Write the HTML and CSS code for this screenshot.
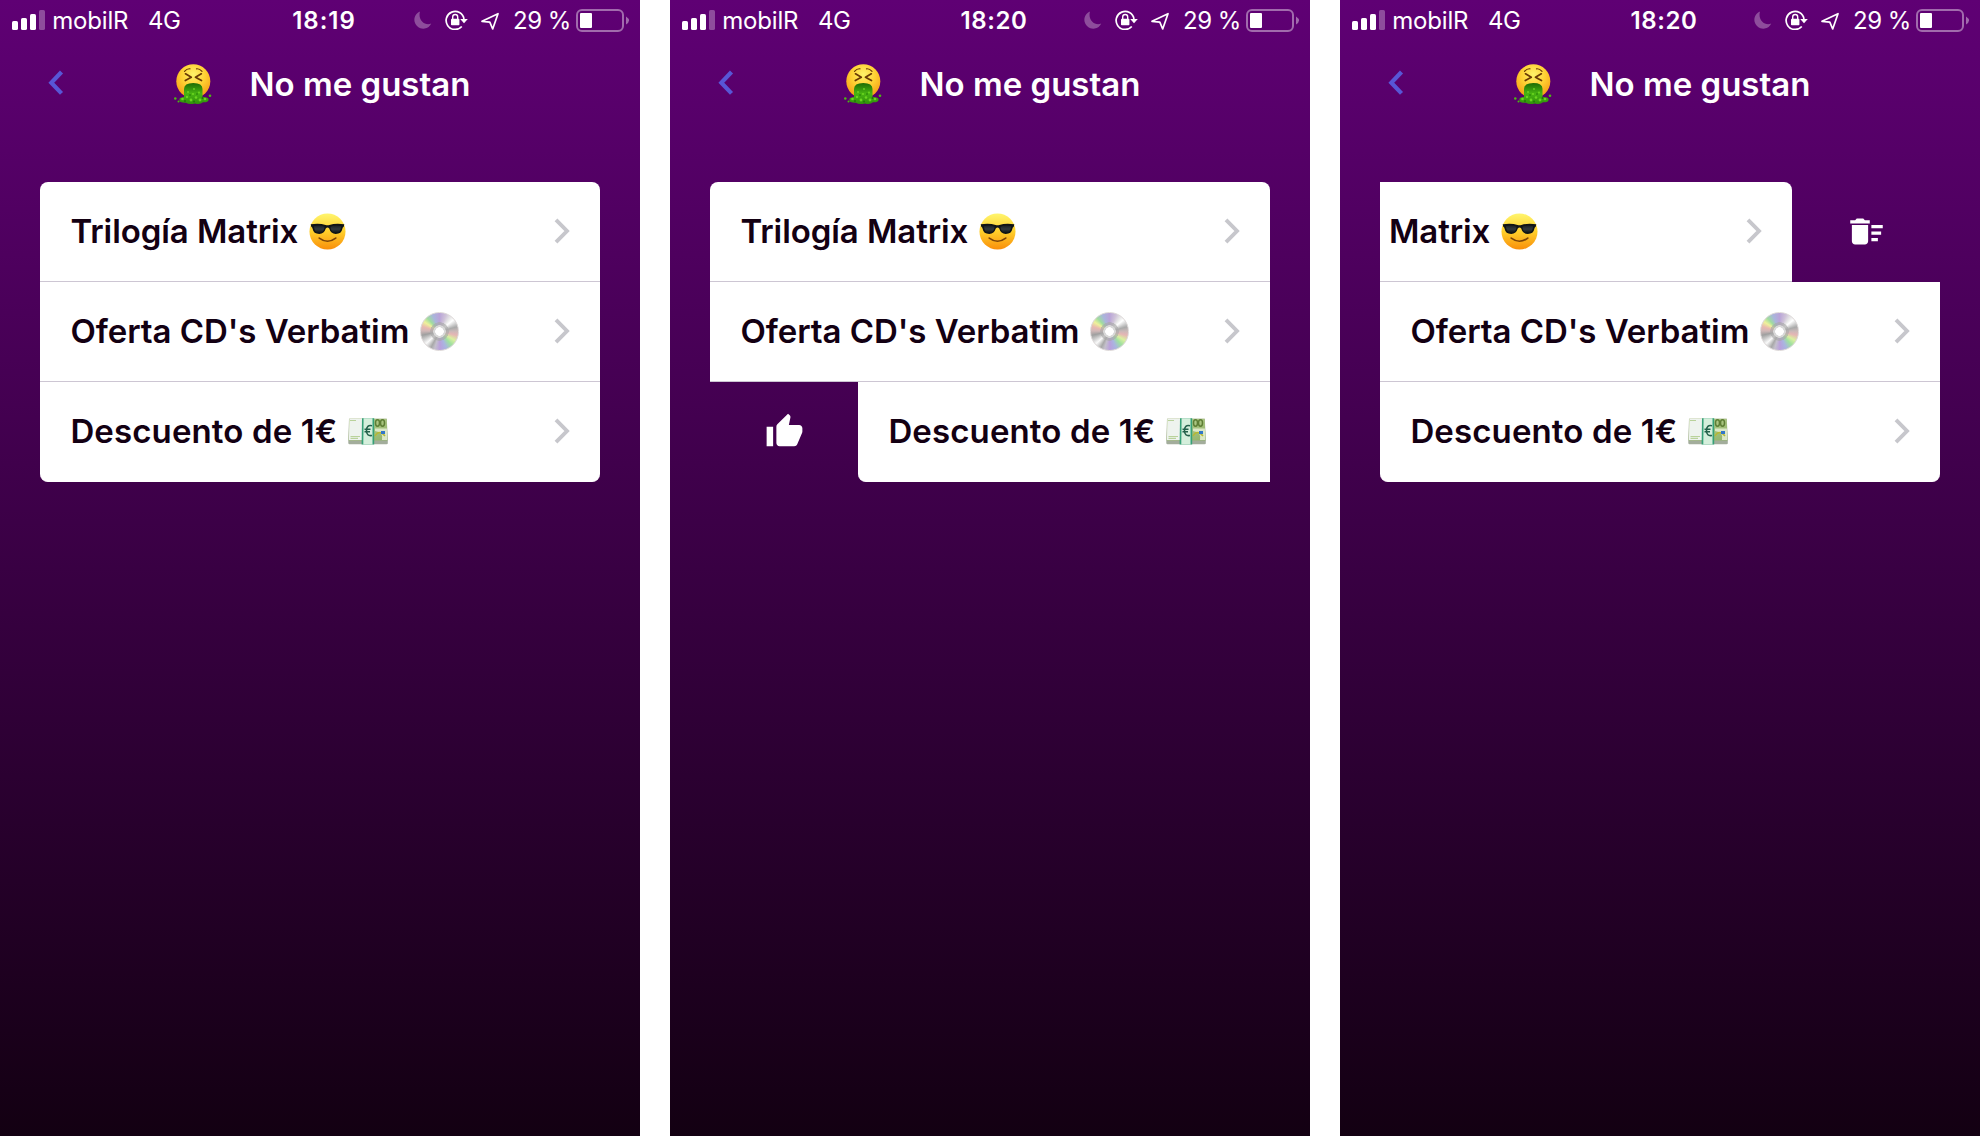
FILE: index.html
```
<!DOCTYPE html>
<html lang="es">
<head>
<meta charset="utf-8">
<title>No me gustan</title>
<link rel="stylesheet" href="styles.css">
</head>
<body>
<svg class="defs" aria-hidden="true">
  <defs>
    <radialGradient id="skin" cx="50%" cy="30%" r="70%">
      <stop offset="0" stop-color="#fff36b"/><stop offset=".5" stop-color="#ffd133"/><stop offset="1" stop-color="#f59a14"/>
    </radialGradient>
    <linearGradient id="shine" x1="0" y1="0" x2="0" y2="1">
      <stop offset="0" stop-color="#fff56e"/><stop offset=".5" stop-color="#ffcf2b"/><stop offset="1" stop-color="#f98f0b"/>
    </linearGradient>
    <linearGradient id="lens" x1="0" y1="0" x2="0" y2="1">
      <stop offset="0" stop-color="#1a2024"/><stop offset=".5" stop-color="#30393d"/><stop offset="1" stop-color="#101416"/>
    </linearGradient>
    <linearGradient id="slime" x1="0" y1="0" x2="0" y2="1">
      <stop offset="0" stop-color="#1d6b05"/><stop offset=".5" stop-color="#48b512"/><stop offset="1" stop-color="#2f900b"/>
    </linearGradient>
    <linearGradient id="note" x1="0" y1="0" x2="1" y2="1">
      <stop offset="0" stop-color="#c4d79a"/><stop offset="1" stop-color="#8fb268"/>
    </linearGradient>

    <symbol id="signal" viewBox="0 0 34 20">
      <g fill="#fff"><rect y="11" width="6" height="9" rx="1.6"/><rect x="9" y="8" width="6" height="12" rx="1.6"/><rect x="18" y="4" width="6" height="16" rx="1.6"/><rect x="27" width="6" height="20" rx="1.6" opacity=".3"/></g>
    </symbol>
    <symbol id="moon" viewBox="0 0 19 19">
      <path d="M7 0.5A8.9 8.9 0 1 0 18.3 12.6C12 15.500 4.500 9 7 0.500Z" fill="#fff" opacity=".3"/>
    </symbol>
    <symbol id="lock" viewBox="0 0 24 20">
      <path d="M16.800 16.500A9 9 0 1 1 19 9" fill="none" stroke="#fff" stroke-width="1.700"/>
      <path d="M15.200 9h7.600l-3.800 4.200z" fill="#fff"/>
      <rect x="6" y="8.700" width="8.400" height="6.500" rx=".8" fill="#fff"/>
      <path d="M7.700 9V7a2.500 2.500 0 0 1 5 0v2" fill="none" stroke="#fff" stroke-width="1.400"/>
    </symbol>
    <symbol id="location" viewBox="0 0 20 19">
      <path d="M18 1.700 12.700 17 9.800 10.100 2 9.300z" fill="none" stroke="#fff" stroke-width="1.700" stroke-linejoin="round"/>
    </symbol>
    <symbol id="battery" viewBox="0 0 54 24">
      <rect x="1" y="1" width="46" height="21" rx="5" fill="none" stroke="#fff" stroke-width="2" opacity=".42"/>
      <rect x="4" y="4" width="12" height="15" rx="1" fill="#fff"/>
      <path d="M50 7.500q6 4 0 8z" fill="#fff" opacity=".42"/>
    </symbol>
    <symbol id="back" viewBox="0 0 16 26">
      <path d="M13.500 2 3.300 12.700l10.200 10.700" fill="none" stroke="#5856d6" stroke-width="4.200"/>
    </symbol>
    <symbol id="chevron" viewBox="0 0 16 26">
      <path d="M2 1.800 13 13 2 24.200" fill="none" stroke="#c7c7cc" stroke-width="3.900"/>
    </symbol>
    <symbol id="thumb" viewBox="0 0 24 24">
      <path fill="#fff" d="M1 21h4V9H1v12zm22-11c0-1.100-.9-2-2-2h-6.310l.95-4.570.03-.32c0-.41-.17-.79-.44-1.060L14.170 1 7.590 7.590C7.220 7.950 7 8.450 7 9v10c0 1.100.9 2 2 2h9c.83 0 1.540-.5 1.840-1.220l3.020-7.050c.09-.23.14-.47.14-.73v-2z"/>
    </symbol>
    <symbol id="sweep" viewBox="0 0 24 24">
      <path fill="#fff" d="M15 16h4v2h-4zm0-8h7v2h-7zm0 4h6v2h-6zM3 18c0 1.100.9 2 2 2h6c1.100 0 2-.9 2-2V8H3v10zM14 5h-3l-1-1H6L5 5H2v2h12z"/>
    </symbol>

    <symbol id="sick" viewBox="0 0 38 41">
      <circle cx="19.300" cy="17.300" r="17" fill="url(#skin)"/>
      <g fill="none" stroke="#6a3a05" stroke-linecap="round" stroke-linejoin="round">
        <path d="M10.500 7.300Q13 4.500 16 4.800M28 7.300Q25.500 4.500 22.500 4.800" stroke-width="1.200"/>
        <path d="M11.500 9.800 17.300 13.300 11.300 16.500M27.300 9.800 21.500 13.300 27.500 16.500" stroke-width="1.700"/>
      </g>
      <path d="M10 33V25Q10 19 19.300 19T28.500 25V33Q35 33 34.500 35.500 35 38.500 29 38.300 26 41 21 39.500 15 41 12 38.700 5 39 5.500 36 4.500 33.500 10 33Z" fill="url(#slime)"/>
      <g fill="#6bd420"><circle cx="8.500" cy="35" r="1.300"/><circle cx="13" cy="33" r="1.200"/><circle cx="17" cy="36" r="1.400"/><circle cx="22" cy="33.500" r="1.300"/><circle cx="26" cy="36" r="1.400"/><circle cx="31" cy="35" r="1.300"/><circle cx="14" cy="28" r="1"/><circle cx="19" cy="30" r="1.100"/><circle cx="25" cy="28.500" r="1"/><circle cx="20" cy="25" r=".9"/></g>
      <g fill="#1f7504"><circle cx="11" cy="37" r=".9"/><circle cx="20" cy="37.500" r=".9"/><circle cx="28.500" cy="34" r=".9"/><circle cx="16" cy="31" r=".8"/><circle cx="23" cy="30" r=".8"/></g>
      <g fill="#4bb813"><circle cx="1.300" cy="34.500" r="1.300"/><circle cx="36" cy="31.700" r="1.300"/><circle cx="4.500" cy="37.500" r="1"/></g>
    </symbol>
    <symbol id="cool" viewBox="0 0 38 38">
      <circle cx="19" cy="19" r="18.500" fill="url(#shine)"/>
      <path d="M1.800 11.500Q11 10.300 17 12.200 19 12.800 21 12.200 27 10.300 36.200 11.500L35.700 14Q34.500 14.300 34.200 16.500 33.400 21.500 27.500 21.500 22.300 21.500 20.800 16 19 13.700 17.200 16 15.700 21.500 10.500 21.500 4.600 21.500 3.800 16.500 3.500 14.300 2.300 14Z" fill="#101416"/>
      <path d="M5 13.500Q11 12 16 14 15.500 20.300 10.500 20.300 5.500 20.300 5 13.500ZM33 13.500Q27 12 22 14 22.500 20.300 27.500 20.300 32.500 20.300 33 13.500Z" fill="url(#lens)"/>
      <path d="M10.500 25.800Q19 32.200 27.500 25.800" fill="none" stroke="#7b4308" stroke-width="1.700" stroke-linecap="round"/>
    </symbol>
    <symbol id="money" viewBox="0 0 40 27">
      <path d="M1 .8H38.800L39.800 23V25.200Q39.800 26.300 38.500 26.300H1.500Q.3 26.300.3 25V22.500Z" fill="#a3ad9c"/>
      <path d="M1.300.7H38.700L39.500 22.500H.6Z" fill="url(#note)"/>
      <path d="M1.500.9H16V22H.9Z" fill="#eef3ee"/>
      <path d="M2 2.500H8M2.500 18.500H12M2.500 20.300H10" stroke="#b9d29b" stroke-width="1.200"/>
      <path d="M27 10.500H38.900L39.300 22H34Q36 14 27 13Z" fill="#dce8c7"/>
      <path d="M27 18Q31 11 37 18" fill="none" stroke="#b7b834" stroke-width="1.500"/>
      <g fill="none" stroke="#5e7e35" stroke-width="1.500"><ellipse cx="29.500" cy="5" rx="2" ry="3.200"/><ellipse cx="34.500" cy="5" rx="2" ry="3.200"/></g>
      <rect x="33" y="13" width="4" height="3" fill="#3277c9"/>
      <path d="M14 .3H26.200V26.500H13.600Z" fill="#36a178"/>
      <path d="M15.600.3H24.500V26.500H15.300Z" fill="#d5efdc"/>
      <path d="M24 7.800Q18.500 6.500 18.500 12.500T24 17.500M16.500 11.300H22.500M16.500 13.700H22" fill="none" stroke="#24614b" stroke-width="1.600"/>
    </symbol>
  </defs>
</svg>

<main class="screens">
  <section class="phone">
    <header class="status">
      <div class="carrier"><svg class="signal"><use href="#signal"/></svg><span class="operator">mobilR</span><span class="network">4G</span></div>
      <time class="clock">18:19</time>
      <div class="indicators"><svg class="moon"><use href="#moon"/></svg><svg class="lock"><use href="#lock"/></svg><svg class="location"><use href="#location"/></svg><span class="percent">29 %</span><svg class="battery"><use href="#battery"/></svg></div>
    </header>
    <nav class="nav"><svg class="back"><use href="#back"/></svg><svg class="sick"><use href="#sick"/></svg><h1 class="title">No me gustan</h1></nav>
    <ul class="list">
      <li class="item"><div class="row"><span class="label trilogia">Trilogía Matrix</span><svg class="cool"><use href="#cool"/></svg><svg class="chevron"><use href="#chevron"/></svg></div></li>
      <li class="item"><div class="row"><span class="label oferta">Oferta CD's Verbatim</span><i class="disc"></i><svg class="chevron"><use href="#chevron"/></svg></div></li>
      <li class="item"><div class="row"><span class="label descuento">Descuento de 1€</span><svg class="money"><use href="#money"/></svg><svg class="chevron"><use href="#chevron"/></svg></div></li>
    </ul>
  </section>

  <section class="phone">
    <header class="status">
      <div class="carrier"><svg class="signal"><use href="#signal"/></svg><span class="operator">mobilR</span><span class="network">4G</span></div>
      <time class="clock wide">18:20</time>
      <div class="indicators"><svg class="moon"><use href="#moon"/></svg><svg class="lock"><use href="#lock"/></svg><svg class="location"><use href="#location"/></svg><span class="percent">29 %</span><svg class="battery"><use href="#battery"/></svg></div>
    </header>
    <nav class="nav"><svg class="back"><use href="#back"/></svg><svg class="sick"><use href="#sick"/></svg><h1 class="title">No me gustan</h1></nav>
    <ul class="list">
      <li class="item"><div class="row"><span class="label trilogia">Trilogía Matrix</span><svg class="cool"><use href="#cool"/></svg><svg class="chevron"><use href="#chevron"/></svg></div></li>
      <li class="item"><div class="row"><span class="label oferta">Oferta CD's Verbatim</span><i class="disc"></i><svg class="chevron"><use href="#chevron"/></svg></div></li>
      <li class="item"><div class="action"><svg class="glyph"><use href="#thumb"/></svg></div><div class="row"><span class="label descuento">Descuento de 1€</span><svg class="money"><use href="#money"/></svg><svg class="chevron"><use href="#chevron"/></svg></div></li>
    </ul>
  </section>

  <section class="phone">
    <header class="status">
      <div class="carrier"><svg class="signal"><use href="#signal"/></svg><span class="operator">mobilR</span><span class="network">4G</span></div>
      <time class="clock wide">18:20</time>
      <div class="indicators"><svg class="moon"><use href="#moon"/></svg><svg class="lock"><use href="#lock"/></svg><svg class="location"><use href="#location"/></svg><span class="percent">29 %</span><svg class="battery"><use href="#battery"/></svg></div>
    </header>
    <nav class="nav"><svg class="back"><use href="#back"/></svg><svg class="sick"><use href="#sick"/></svg><h1 class="title">No me gustan</h1></nav>
    <ul class="list">
      <li class="item swiped-left"><div class="row"><span class="label trilogia">Trilogía Matrix</span><svg class="cool"><use href="#cool"/></svg><svg class="chevron"><use href="#chevron"/></svg></div><div class="action"><svg class="glyph sweep"><use href="#sweep"/></svg></div></li>
      <li class="item"><div class="row"><span class="label oferta">Oferta CD's Verbatim</span><i class="disc"></i><svg class="chevron"><use href="#chevron"/></svg></div></li>
      <li class="item"><div class="row"><span class="label descuento">Descuento de 1€</span><svg class="money"><use href="#money"/></svg><svg class="chevron"><use href="#chevron"/></svg></div></li>
    </ul>
  </section>
</main>
</body>
</html>
```
FILE: styles.css
```
* { box-sizing: border-box; }
body { margin: 0; background: #fff; font-family: Inter, "Liberation Sans", sans-serif; overflow: hidden; }
svg { display: block; flex: none; }
.defs { position: absolute; width: 0; height: 0; }

.screens { display: flex; gap: 30px; height: 1136px; }
.phone { flex: none; width: 640px; height: 1136px; background: linear-gradient(#5f0074, #130012); }

/* Status bar */
.status { display: flex; height: 40px; color: #fff; font-size: 24px; white-space: nowrap; }
.carrier { display: flex; align-items: center; width: 284px; padding-left: 12px; }
.signal { width: 34px; height: 20px; }
.operator { margin-left: 6.300px; letter-spacing: -.2px; }
.network { margin-left: 19.700px; letter-spacing: -.5px; }
.clock { display: flex; align-items: center; justify-content: center; width: 80px; font-weight: 600; letter-spacing: 1px; }
.clock.wide { letter-spacing: .6px; }
.indicators { display: flex; align-items: center; flex: 1; padding-left: 49px; }
.moon { width: 19px; height: 19px; }
.lock { width: 24px; height: 20px; margin-left: 13px; }
.location { width: 20px; height: 19px; margin: 2px 0 0 11px; }
.percent { margin-left: 13px; width: 63px; letter-spacing: -.5px; }
.battery { width: 54px; height: 24px; margin-top: 1px; }

/* Navigation */
.nav { display: flex; align-items: center; height: 88px; padding-left: 48px; color: #fff; }
.back { width: 16px; height: 26px; margin-top: -2px; }
.sick { width: 38px; height: 41px; margin-left: 110px; }
.title { margin: 0 0 0 37.500px; font-size: 33px; font-weight: 600; }

/* List with swipe actions */
.list { width: 560px; margin: 54px 40px 0; padding: 0; list-style: none; overflow: hidden; }
.item { display: flex; height: 100px; }
.row { display: flex; flex: none; align-items: center; width: 560px; height: 100px; padding: 0 30px 0 30.400px; background: #fff; border-bottom: 1px solid #cdc6d3; color: #130012; font-size: 33px; font-weight: 600; }
.item:first-child .row { border-radius: 8px 8px 0 0; }
.item:last-child .row { border-radius: 0 0 8px 8px; border-bottom: 1px solid #fff; }
.swiped-left { justify-content: flex-end; }
.action { display: flex; flex: none; align-items: center; justify-content: center; width: 148px; height: 100px; }
.glyph { width: 39px; height: 39px; margin-bottom: 1px; }
.sweep { margin-bottom: 2px; }
.label { white-space: nowrap; padding-bottom: 2px; }
.trilogia { width: 238.600px; letter-spacing: -.08px; }
.oferta { width: 349.600px; letter-spacing: -.05px; }
.descuento { width: 277.600px; letter-spacing: .12px; }
.cool { width: 37px; height: 37px; }
.disc {
  width: 39px; height: 39px; border-radius: 50%; border: 1px solid #ddd8d8;
  background:
    radial-gradient(circle, #fff 0 4px, #d8d8d8 4.500px 6px, #a9a9a9aa 6.500px 9px, transparent 9.500px),
    conic-gradient(#b9a3d8, #cfc4d8 22deg, #e8e8e8 38deg, #fff 50deg, #a9a9a9 75deg, #c9b9b9 88deg, #e5b5b5 102deg, #d9f0a0 120deg, #9fe0a0 138deg, #a9b5e0 158deg, #b9a0dc 178deg, #c4c0cc 196deg, #a8a8a8 208deg, #fafafa 228deg, #9f9f9f 258deg, #d0b8b8 272deg, #e9b8b0 286deg, #eef29a 302deg, #9fdc9f 318deg, #a9b5dc 338deg, #b9a3d8);
}
.money { width: 40px; height: 27px; margin-bottom: 1px; }
.chevron { width: 16px; height: 26px; margin-left: auto; margin-bottom: 1px; }
```
